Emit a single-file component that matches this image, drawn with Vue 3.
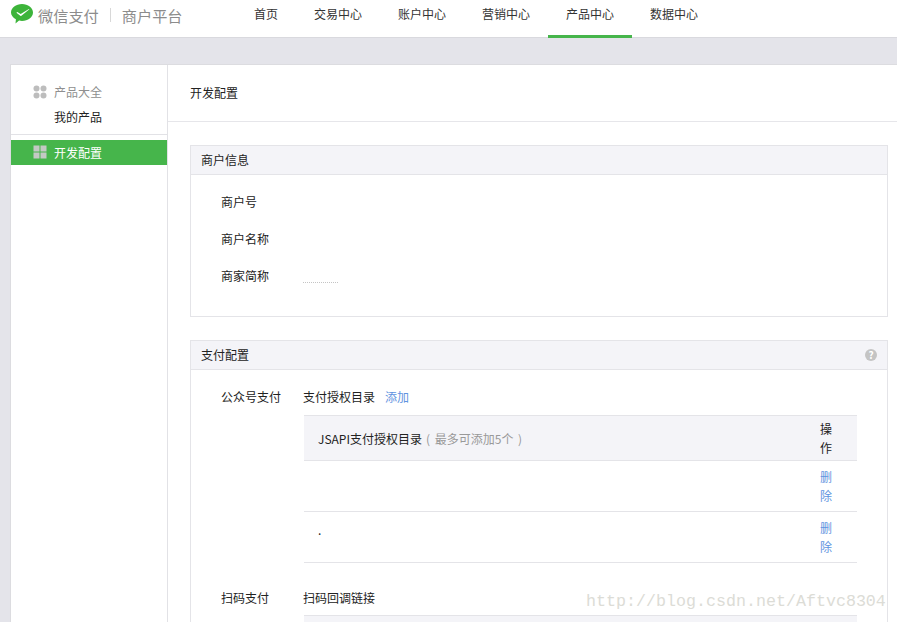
<template>
  <div class="page">
    <header class="topbar">
      <div class="logo">
        <svg class="logo-icon" width="24" height="24" viewBox="0 0 24 24">
          <path d="M12 1c6 0 11 3.800 11 8.500S18 18 12 18c-1 0-2-.1-2.900-.4l-3.600 2.900.4-4.300C3 14.700 1 12.300 1 9.500 1 4.800 6 1 12 1z" fill="#3db43a"/>
          <path d="M6.400 9.700l.9-.6 3.400 2 8.200-5.200.5.400-8 6.400c-.4.300-.8.300-1.100 0z" fill="#fff"/>
        </svg>
        <span class="logo-text">微信支付</span>
        <i class="logo-sep"></i>
        <span class="logo-text">商户平台</span>
      </div>
      <nav class="nav">
        <a v-for="item in navItems" :key="item" class="nav-item" :class="{ active: item === '产品中心' }">{{ item }}</a>
      </nav>
    </header>

    <div class="panel">
      <aside class="side">
        <div class="side-group">
          <div class="side-title">
            <svg class="side-icon" width="14" height="14" viewBox="0 0 14 14" fill="#bdbdbd">
              <circle cx="3.500" cy="3.500" r="3"/>
              <circle cx="10.500" cy="3.500" r="3"/>
              <circle cx="3.500" cy="10.500" r="3"/>
              <circle cx="10.500" cy="10.500" r="3"/>
            </svg>
            产品大全
          </div>
          <div class="side-link">我的产品</div>
        </div>
        <div class="side-active">
          <svg class="side-icon" width="14" height="14" viewBox="0 0 14 14" fill="#c3c9c3">
            <rect x="0.500" y="0.500" width="6" height="6"/>
            <rect x="7.500" y="0.500" width="6" height="6"/>
            <rect x="0.500" y="7.500" width="6" height="6"/>
            <rect x="7.500" y="7.500" width="6" height="6"/>
          </svg>
          开发配置
        </div>
      </aside>

      <main class="main">
        <div class="main-title">开发配置</div>
        <div class="main-body">
          <section class="card card-info">
            <div class="card-head">商户信息</div>
            <div class="card-body info-body">
              <div v-for="label in infoRows" :key="label" class="info-row">{{ label }}</div>
              <i class="speck-line"></i>
            </div>
          </section>

          <section class="card">
            <div class="card-head">
              支付配置
              <span class="help">?</span>
            </div>
            <div class="card-body pay-body">
              <div class="pay-row">
                <div class="pay-label">公众号支付</div>
                <div class="pay-content">
                  <div class="pay-title">支付授权目录<a class="link add">添加</a></div>
                  <div class="dir-table">
                    <div class="dir-row dir-head">
                      <div class="dir-main">JSAPI支付授权目录<span class="hint">( 最多可添加5个 )</span></div>
                      <div class="dir-op">操作</div>
                    </div>
                    <div v-for="row in dirRows" :key="row.id" class="dir-row">
                      <div class="dir-main dir-value">{{ row.text }}</div>
                      <div class="dir-op link">删除</div>
                    </div>
                  </div>
                </div>
              </div>
              <div class="pay-row scan">
                <div class="pay-label">扫码支付</div>
                <div class="pay-content">
                  <div class="pay-title">扫码回调链接</div>
                  <div class="dir-table">
                    <div class="dir-row dir-head"></div>
                  </div>
                </div>
              </div>
            </div>
          </section>
        </div>
      </main>
    </div>

    <div class="watermark">http://blog.csdn.net/Aftvc8304</div>
  </div>
</template>

<script setup>
const navItems = ['首页', '交易中心', '账户中心', '营销中心', '产品中心', '数据中心']
const infoRows = ['商户号', '商户名称', '商家简称']
const dirRows = [
  { id: 1, text: '' },
  { id: 2, text: '.' }
]
</script>

<style>
html, body {
  margin: 0;
  height: 100%;
  overflow: hidden;
  background: #e4e4ea;
}
</style>

<style scoped>
.page {
  position: relative;
  height: 622px;
  overflow: hidden;
  font-family: "Noto Sans CJK SC", "Noto Sans", sans-serif;
  font-size: 12px;
  color: #222;
  background: #e4e4ea;
}

/* top bar */
.topbar {
  display: flex;
  height: 37px;
  background: #fff;
  border-bottom: 1px solid #d9d9de;
}
.logo {
  display: flex;
  align-items: center;
  width: 236px;
  padding: 0 0 8px 10px;
  box-sizing: border-box;
}
.logo-icon {
  margin: 1px 4px 0 0;
}
.logo-text {
  font-size: 15.200px;
  color: #8c8c8c;
}
.logo-sep {
  width: 1px;
  height: 14px;
  margin: 0 11px;
  background: #d8d8d8;
}
.nav {
  display: flex;
}
.nav-item {
  height: 37px;
  padding: 0 18px;
  margin-bottom: -1px;
  line-height: 28px;
  box-sizing: border-box;
  color: #333;
}
.nav-item.active {
  height: 38px;
  border-bottom: 3px solid #46b54b;
}

/* panel */
.panel {
  display: flex;
  margin: 26px 0 0 10px;
  background: #fff;
  border-top: 1px solid #dcdce0;
  border-left: 1px solid #dcdce0;
  height: 600px;
}
.side {
  flex: none;
  width: 156px;
  border-right: 1px solid #e2e2e6;
}
.side-group {
  height: 70px;
  padding-top: 14px;
  box-sizing: border-box;
  border-bottom: 1px solid #e2e2e6;
}
.side-title {
  display: flex;
  align-items: center;
  height: 25px;
  padding-left: 22px;
  color: #8f8f8f;
}
.side-icon {
  margin-right: 7px;
}
.side-link {
  height: 25px;
  padding-left: 43px;
  line-height: 25px;
  color: #222;
}
.side-active {
  display: flex;
  align-items: center;
  height: 24px;
  margin-top: 5px;
  padding: 0 0 1px 22px;
  color: #fff;
  background: #46b54b;
}

/* main */
.main {
  flex: 1;
  min-width: 0;
}
.main-title {
  height: 56px;
  padding-left: 22px;
  line-height: 56px;
  border-bottom: 1px solid #e6e6ea;
}
.main-body {
  padding: 23px 9px 0 22px;
}
.card {
  border: 1px solid #e4e4e8;
}
.card-info {
  margin-bottom: 23px;
}
.card-head {
  display: flex;
  justify-content: space-between;
  align-items: center;
  height: 27px;
  padding: 0 10px 1px;
  background: #f4f4f8;
  border-bottom: 1px solid #e4e4e8;
}
.help {
  width: 12px;
  height: 12px;
  border-radius: 50%;
  font-size: 10px;
  font-weight: 700;
  line-height: 12px;
  text-align: center;
  color: #fff;
  background: #c4c4c4;
}
.info-body {
  position: relative;
  height: 141px;
  padding-top: 8px;
  box-sizing: border-box;
}
.info-row {
  height: 37px;
  padding-left: 30px;
  line-height: 37px;
}
.speck-line {
  position: absolute;
  left: 112px;
  top: 107px;
  width: 35px;
  border-top: 1px dotted #c4c4c4;
}
.pay-body {
  padding-top: 17px;
}
.pay-row {
  display: flex;
}
.pay-row.scan {
  margin-top: 25px;
}
.pay-label {
  flex: none;
  width: 82px;
  padding-left: 30px;
  line-height: 19px;
}
.pay-content {
  flex: 1;
  min-width: 0;
  margin-right: 30px;
}
.pay-title {
  height: 28px;
  line-height: 19px;
}
.scan .pay-title {
  height: 27px;
}
.link {
  color: #5f93e0;
}
.add {
  margin-left: 10px;
}
.dir-table {
  margin-left: 1px;
  border-top: 1px solid #e4e4e8;
}
.dir-row {
  display: flex;
  padding: 6px 0;
  line-height: 19px;
  border-bottom: 1px solid #e4e4e8;
}
.dir-head {
  min-height: 38px;
  padding: 3px 0;
  background: #f4f4f8;
}
.dir-main {
  flex: 1;
  padding-left: 14px;
  align-self: center;
}
.dir-value {
  align-self: flex-start;
  line-height: 24px;
}
.hint {
  margin-left: 4px;
  word-spacing: 2px;
  color: #999;
}
.dir-op {
  flex: none;
  width: 13px;
  margin-right: 24px;
}

.watermark {
  position: absolute;
  left: 586px;
  top: 591px;
  font-family: "Liberation Mono", monospace;
  font-size: 16.670px;
  line-height: 22px;
  color: #dcdcd6;
  white-space: nowrap;
}
</style>
